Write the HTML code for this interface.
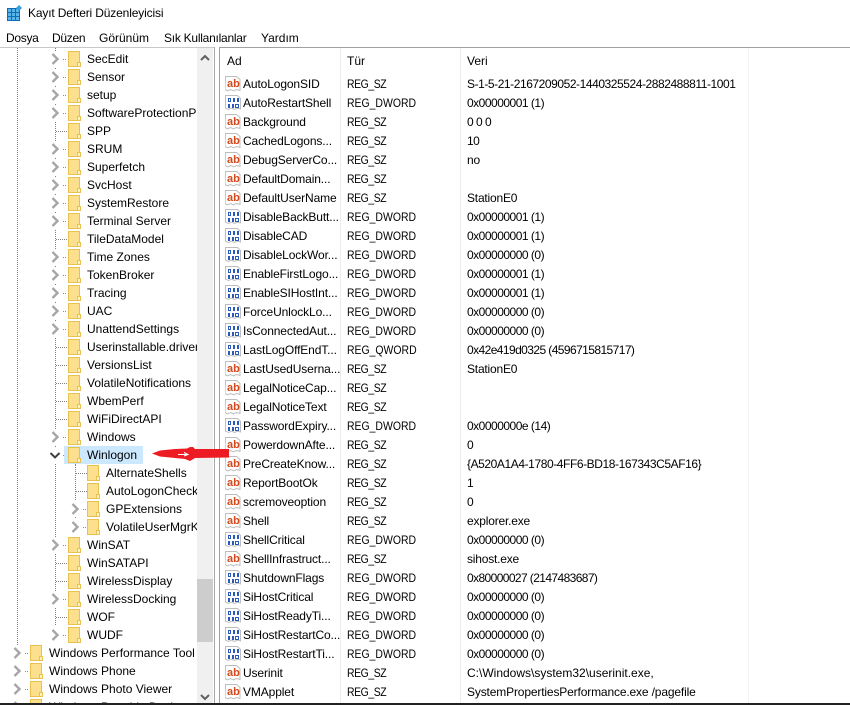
<!DOCTYPE html>
<html><head><meta charset="utf-8"><style>
html,body{margin:0;padding:0;background:#fff}
#w{position:relative;width:850px;height:705px;overflow:hidden;background:#fff;font:12px "Liberation Sans",sans-serif;color:#000}
.a{position:absolute;white-space:nowrap}
#tree{position:absolute;left:0;top:48px;width:197px;height:655px;overflow:hidden}
#list{position:absolute;left:220px;top:48px;width:630px;height:655px;overflow:hidden}
#tree div,#list div{position:absolute;white-space:nowrap;line-height:18px;height:18px}
#tree svg,#list svg{position:absolute;overflow:visible}
.f{width:13px;height:16px}
.c{width:17px;height:16px}
.n{left:23px;width:97px;overflow:hidden;letter-spacing:-.12px}
.t{left:127px;transform:scaleX(.87);transform-origin:left center}
.s{letter-spacing:-.5px}
.v{left:247px;letter-spacing:-.5px}
.w{letter-spacing:-.2px}
.i{left:5px;width:16px;height:16px}
</style></head><body><div id="w">
<svg width="0" height="0" style="position:absolute"><defs>
<symbol id="fo" viewBox="0 0 13 16"><path d="M.5.5h11v15H.5z" fill="#fde08e" stroke="#e9c14f"/><path d="M9.500 15.500v-4h3v4z" fill="#fff2c4" stroke="#e9c14f"/></symbol>
<symbol id="ch" viewBox="0 0 17 16"><rect width="12" height="16" fill="#fff"/><path d="M2.500 3l5 5-5 5" fill="none" stroke="#a6a6a6" stroke-width="2.400"/><path d="M13 8.500h1M15 8.500h1" stroke="#8c8c8c"/></symbol>
<symbol id="bi" viewBox="0 0 16 16"><path d="M.5.5h12l3 3v10.500l-3-.8-3 1.300-3-1.300-3 1.300-3-1.300z" fill="#fff" stroke="#bdbdbd"/><path d="M3 3h3v4H3zM4 4v2h1V4z" fill="#2a5ab8" fill-rule="evenodd"/><path d="M8 3h2v4H8zM12 3h2v4h-2zM3 9h2v4H3zM7 9h2v4H7z" fill="#2a5ab8"/><path d="M10 9h4v4h-4zM11 10v2h2v-2z" fill="#2a5ab8" fill-rule="evenodd"/></symbol>
<symbol id="pg" viewBox="0 0 16 16"><path d="M.5.5h11l3.500 3v11l-3.500-1-3 1.300-3-1.300-3 1.300-2.500-1.300z" fill="#fff" stroke="#bdbdbd"/></symbol>
</defs></svg>

<svg class="a" style="left:7px;top:5px" width="16" height="16" viewBox="0 0 16 16"><path d="M0 3h13v13H0z" fill="#0f6cb8"/><path d="M1 4h3v3H1zM5 4h3v3H5zM9 4h3v3H9zM1 8h3v3H1zM5 8h3v3H5zM9 8h3v3H9zM1 12h3v3H1zM5 12h3v3H5zM9 12h3v3H9z" fill="#59b4e8"/><path d="M12 0l3 3-3 3-3-3z" fill="#3aa0dc"/></svg>
<div class="a" style="left:28px;top:6px;line-height:14px;letter-spacing:-.15px">Kayıt Defteri Düzenleyicisi</div>
<div class="a" style="left:6px;top:31px;line-height:14px;letter-spacing:-.3px">Dosya</div>
<div class="a" style="left:52px;top:31px;line-height:14px;letter-spacing:-.3px">Düzen</div>
<div class="a" style="left:99px;top:31px;line-height:14px">Görünüm</div>
<div class="a" style="left:164px;top:31px;line-height:14px;letter-spacing:-.25px">Sık Kullanılanlar</div>
<div class="a" style="left:261px;top:31px;line-height:14px">Yardım</div>

<div class="a" style="left:0;top:47px;width:215px;height:1px;background:#c8c8c8"></div>
<div class="a" style="left:219px;top:47px;width:631px;height:1px;background:#a0a0a0"></div>
<div class="a" style="left:214px;top:47px;width:1px;height:656px;background:#a8a8a8"></div>
<div class="a" style="left:219px;top:47px;width:1px;height:656px;background:#a0a0a0"></div>

<div class="a" style="left:17px;top:48px;height:597px;border-left:1px dotted #808080"></div>
<div class="a" style="left:55px;top:48px;height:577px;border-left:1px dotted #808080"></div>
<div class="a" style="left:75px;top:464px;height:60px;border-left:1px dotted #808080"></div>

<div id="tree">
<div style="left:64px;top:398px;width:79px;background:#cce8ff"></div>
<svg class="c" style="left:50px;top:3px"><use href="#ch"/></svg><svg class="f" style="left:68px;top:3px"><use href="#fo"/></svg><div style="left:87px;top:2px">SecEdit</div>
<svg class="c" style="left:50px;top:21px"><use href="#ch"/></svg><svg class="f" style="left:68px;top:21px"><use href="#fo"/></svg><div style="left:87px;top:20px">Sensor</div>
<svg class="c" style="left:50px;top:39px"><use href="#ch"/></svg><svg class="f" style="left:68px;top:39px"><use href="#fo"/></svg><div style="left:87px;top:38px">setup</div>
<svg class="c" style="left:50px;top:57px"><use href="#ch"/></svg><svg class="f" style="left:68px;top:57px"><use href="#fo"/></svg><div style="left:87px;top:56px">SoftwareProtectionP</div>
<svg style="left:56px;top:83px" width="12" height="1"><path d="M0 .5h12" stroke="#808080" stroke-dasharray="1 1"/></svg><svg class="f" style="left:68px;top:75px"><use href="#fo"/></svg><div style="left:87px;top:74px">SPP</div>
<svg class="c" style="left:50px;top:93px"><use href="#ch"/></svg><svg class="f" style="left:68px;top:93px"><use href="#fo"/></svg><div style="left:87px;top:92px">SRUM</div>
<svg class="c" style="left:50px;top:111px"><use href="#ch"/></svg><svg class="f" style="left:68px;top:111px"><use href="#fo"/></svg><div style="left:87px;top:110px">Superfetch</div>
<svg class="c" style="left:50px;top:129px"><use href="#ch"/></svg><svg class="f" style="left:68px;top:129px"><use href="#fo"/></svg><div style="left:87px;top:128px">SvcHost</div>
<svg class="c" style="left:50px;top:147px"><use href="#ch"/></svg><svg class="f" style="left:68px;top:147px"><use href="#fo"/></svg><div style="left:87px;top:146px">SystemRestore</div>
<svg class="c" style="left:50px;top:165px"><use href="#ch"/></svg><svg class="f" style="left:68px;top:165px"><use href="#fo"/></svg><div style="left:87px;top:164px">Terminal Server</div>
<svg style="left:56px;top:191px" width="12" height="1"><path d="M0 .5h12" stroke="#808080" stroke-dasharray="1 1"/></svg><svg class="f" style="left:68px;top:183px"><use href="#fo"/></svg><div style="left:87px;top:182px">TileDataModel</div>
<svg class="c" style="left:50px;top:201px"><use href="#ch"/></svg><svg class="f" style="left:68px;top:201px"><use href="#fo"/></svg><div style="left:87px;top:200px">Time Zones</div>
<svg class="c" style="left:50px;top:219px"><use href="#ch"/></svg><svg class="f" style="left:68px;top:219px"><use href="#fo"/></svg><div style="left:87px;top:218px">TokenBroker</div>
<svg class="c" style="left:50px;top:237px"><use href="#ch"/></svg><svg class="f" style="left:68px;top:237px"><use href="#fo"/></svg><div style="left:87px;top:236px">Tracing</div>
<svg class="c" style="left:50px;top:255px"><use href="#ch"/></svg><svg class="f" style="left:68px;top:255px"><use href="#fo"/></svg><div style="left:87px;top:254px">UAC</div>
<svg class="c" style="left:50px;top:273px"><use href="#ch"/></svg><svg class="f" style="left:68px;top:273px"><use href="#fo"/></svg><div style="left:87px;top:272px">UnattendSettings</div>
<svg style="left:56px;top:299px" width="12" height="1"><path d="M0 .5h12" stroke="#808080" stroke-dasharray="1 1"/></svg><svg class="f" style="left:68px;top:291px"><use href="#fo"/></svg><div style="left:87px;top:290px">Userinstallable.driver</div>
<svg style="left:56px;top:317px" width="12" height="1"><path d="M0 .5h12" stroke="#808080" stroke-dasharray="1 1"/></svg><svg class="f" style="left:68px;top:309px"><use href="#fo"/></svg><div style="left:87px;top:308px">VersionsList</div>
<svg style="left:56px;top:335px" width="12" height="1"><path d="M0 .5h12" stroke="#808080" stroke-dasharray="1 1"/></svg><svg class="f" style="left:68px;top:327px"><use href="#fo"/></svg><div style="left:87px;top:326px">VolatileNotifications</div>
<svg style="left:56px;top:353px" width="12" height="1"><path d="M0 .5h12" stroke="#808080" stroke-dasharray="1 1"/></svg><svg class="f" style="left:68px;top:345px"><use href="#fo"/></svg><div style="left:87px;top:344px">WbemPerf</div>
<svg style="left:56px;top:371px" width="12" height="1"><path d="M0 .5h12" stroke="#808080" stroke-dasharray="1 1"/></svg><svg class="f" style="left:68px;top:363px"><use href="#fo"/></svg><div style="left:87px;top:362px">WiFiDirectAPI</div>
<svg class="c" style="left:50px;top:381px"><use href="#ch"/></svg><svg class="f" style="left:68px;top:381px"><use href="#fo"/></svg><div style="left:87px;top:380px">Windows</div>
<svg class="c" style="left:48px;top:399px"><rect x="2" width="11" height="16" fill="#fff"/><path d="M2.500 6l4.500 4.500L11.500 6" fill="none" stroke="#404040" stroke-width="2"/><path d="M15 8.500h1" stroke="#8c8c8c"/></svg><svg class="f" style="left:68px;top:399px"><use href="#fo"/></svg><div style="left:87px;top:398px">Winlogon</div>
<svg style="left:76px;top:425px" width="11" height="1"><path d="M0 .5h11" stroke="#808080" stroke-dasharray="1 1"/></svg><svg class="f" style="left:87px;top:417px"><use href="#fo"/></svg><div style="left:106px;top:416px">AlternateShells</div>
<svg style="left:76px;top:443px" width="11" height="1"><path d="M0 .5h11" stroke="#808080" stroke-dasharray="1 1"/></svg><svg class="f" style="left:87px;top:435px"><use href="#fo"/></svg><div style="left:106px;top:434px">AutoLogonCheck</div>
<svg class="c" style="left:70px;top:453px"><use href="#ch"/></svg><svg class="f" style="left:87px;top:453px"><use href="#fo"/></svg><div style="left:106px;top:452px">GPExtensions</div>
<svg class="c" style="left:70px;top:471px"><use href="#ch"/></svg><svg class="f" style="left:87px;top:471px"><use href="#fo"/></svg><div style="left:106px;top:470px">VolatileUserMgrK</div>
<svg class="c" style="left:50px;top:489px"><use href="#ch"/></svg><svg class="f" style="left:68px;top:489px"><use href="#fo"/></svg><div style="left:87px;top:488px">WinSAT</div>
<svg style="left:56px;top:515px" width="12" height="1"><path d="M0 .5h12" stroke="#808080" stroke-dasharray="1 1"/></svg><svg class="f" style="left:68px;top:507px"><use href="#fo"/></svg><div style="left:87px;top:506px">WinSATAPI</div>
<svg style="left:56px;top:533px" width="12" height="1"><path d="M0 .5h12" stroke="#808080" stroke-dasharray="1 1"/></svg><svg class="f" style="left:68px;top:525px"><use href="#fo"/></svg><div style="left:87px;top:524px">WirelessDisplay</div>
<svg class="c" style="left:50px;top:543px"><use href="#ch"/></svg><svg class="f" style="left:68px;top:543px"><use href="#fo"/></svg><div style="left:87px;top:542px">WirelessDocking</div>
<svg style="left:56px;top:569px" width="12" height="1"><path d="M0 .5h12" stroke="#808080" stroke-dasharray="1 1"/></svg><svg class="f" style="left:68px;top:561px"><use href="#fo"/></svg><div style="left:87px;top:560px">WOF</div>
<svg class="c" style="left:50px;top:579px"><use href="#ch"/></svg><svg class="f" style="left:68px;top:579px"><use href="#fo"/></svg><div style="left:87px;top:578px">WUDF</div>
<svg class="c" style="left:12px;top:597px"><use href="#ch"/></svg><svg class="f" style="left:30px;top:597px"><use href="#fo"/></svg><div style="left:49px;top:596px">Windows Performance Tool</div>
<svg class="c" style="left:12px;top:615px"><use href="#ch"/></svg><svg class="f" style="left:30px;top:615px"><use href="#fo"/></svg><div style="left:49px;top:614px">Windows Phone</div>
<svg class="c" style="left:12px;top:633px"><use href="#ch"/></svg><svg class="f" style="left:30px;top:633px"><use href="#fo"/></svg><div style="left:49px;top:632px">Windows Photo Viewer</div>
<svg class="c" style="left:12px;top:651px"><use href="#ch"/></svg><svg class="f" style="left:30px;top:651px"><use href="#fo"/></svg><div style="left:49px;top:650px">Windows Portable Devices</div>
</div>

<div class="a" style="left:197px;top:48px;width:16px;height:655px;background:#f0f0f0"></div>
<div class="a" style="left:197px;top:579px;width:16px;height:63px;background:#cdcdcd"></div>
<svg class="a" style="left:197px;top:50px" width="16" height="16"><path d="M4 10l4-4 4 4" fill="none" stroke="#606060" stroke-width="2"/></svg>
<svg class="a" style="left:197px;top:693px" width="16" height="10"><path d="M4 2l4 4 4-4" fill="none" stroke="#606060" stroke-width="2"/></svg>

<div class="a" style="left:340px;top:48px;width:1px;height:655px;background:#ececec"></div>
<div class="a" style="left:460px;top:48px;width:1px;height:655px;background:#ececec"></div>
<div class="a" style="left:748px;top:48px;width:1px;height:655px;background:#f4f4f4"></div>

<div class="a" style="left:227px;top:54px;line-height:14px">Ad</div>
<div class="a" style="left:347px;top:54px;line-height:14px">Tür</div>
<div class="a" style="left:467px;top:54px;line-height:14px">Veri</div>

<div id="list">
<svg class="i" style="top:28px"><use href="#pg"/></svg><div style="left:7px;top:27px;color:#d24a1e;font-weight:bold;font-size:11px">ab</div><div class="n" style="top:27px">AutoLogonSID</div><div class="t s" style="top:27px">REG_SZ</div><div class="v" style="top:27px;letter-spacing:-.44px">S-1-5-21-2167209052-1440325524-2882488811-1001</div>
<svg class="i" style="top:47px"><use href="#bi"/></svg><div class="n" style="top:46px">AutoRestartShell</div><div class="t" style="top:46px">REG_DWORD</div><div class="v" style="top:46px">0x00000001 (1)</div>
<svg class="i" style="top:66px"><use href="#pg"/></svg><div style="left:7px;top:65px;color:#d24a1e;font-weight:bold;font-size:11px">ab</div><div class="n" style="top:65px">Background</div><div class="t s" style="top:65px">REG_SZ</div><div class="v" style="top:65px">0 0 0</div>
<svg class="i" style="top:85px"><use href="#pg"/></svg><div style="left:7px;top:84px;color:#d24a1e;font-weight:bold;font-size:11px">ab</div><div class="n" style="top:84px">CachedLogons...</div><div class="t s" style="top:84px">REG_SZ</div><div class="v" style="top:84px">10</div>
<svg class="i" style="top:104px"><use href="#pg"/></svg><div style="left:7px;top:103px;color:#d24a1e;font-weight:bold;font-size:11px">ab</div><div class="n" style="top:103px">DebugServerCo...</div><div class="t s" style="top:103px">REG_SZ</div><div class="v w" style="top:103px">no</div>
<svg class="i" style="top:123px"><use href="#pg"/></svg><div style="left:7px;top:122px;color:#d24a1e;font-weight:bold;font-size:11px">ab</div><div class="n" style="top:122px">DefaultDomain...</div><div class="t s" style="top:122px">REG_SZ</div>
<svg class="i" style="top:142px"><use href="#pg"/></svg><div style="left:7px;top:141px;color:#d24a1e;font-weight:bold;font-size:11px">ab</div><div class="n" style="top:141px">DefaultUserName</div><div class="t s" style="top:141px">REG_SZ</div><div class="v w" style="top:141px">StationE0</div>
<svg class="i" style="top:161px"><use href="#bi"/></svg><div class="n" style="top:160px">DisableBackButt...</div><div class="t" style="top:160px">REG_DWORD</div><div class="v" style="top:160px">0x00000001 (1)</div>
<svg class="i" style="top:180px"><use href="#bi"/></svg><div class="n" style="top:179px">DisableCAD</div><div class="t" style="top:179px">REG_DWORD</div><div class="v" style="top:179px">0x00000001 (1)</div>
<svg class="i" style="top:199px"><use href="#bi"/></svg><div class="n" style="top:198px">DisableLockWor...</div><div class="t" style="top:198px">REG_DWORD</div><div class="v" style="top:198px">0x00000000 (0)</div>
<svg class="i" style="top:218px"><use href="#bi"/></svg><div class="n" style="top:217px">EnableFirstLogo...</div><div class="t" style="top:217px">REG_DWORD</div><div class="v" style="top:217px">0x00000001 (1)</div>
<svg class="i" style="top:237px"><use href="#bi"/></svg><div class="n" style="top:236px">EnableSIHostInt...</div><div class="t" style="top:236px">REG_DWORD</div><div class="v" style="top:236px">0x00000001 (1)</div>
<svg class="i" style="top:256px"><use href="#bi"/></svg><div class="n" style="top:255px">ForceUnlockLo...</div><div class="t" style="top:255px">REG_DWORD</div><div class="v" style="top:255px">0x00000000 (0)</div>
<svg class="i" style="top:275px"><use href="#bi"/></svg><div class="n" style="top:274px">IsConnectedAut...</div><div class="t" style="top:274px">REG_DWORD</div><div class="v" style="top:274px">0x00000000 (0)</div>
<svg class="i" style="top:294px"><use href="#bi"/></svg><div class="n" style="top:293px">LastLogOffEndT...</div><div class="t" style="top:293px">REG_QWORD</div><div class="v" style="top:293px;letter-spacing:-.58px">0x42e419d0325 (4596715815717)</div>
<svg class="i" style="top:313px"><use href="#pg"/></svg><div style="left:7px;top:312px;color:#d24a1e;font-weight:bold;font-size:11px">ab</div><div class="n" style="top:312px">LastUsedUserna...</div><div class="t s" style="top:312px">REG_SZ</div><div class="v w" style="top:312px">StationE0</div>
<svg class="i" style="top:332px"><use href="#pg"/></svg><div style="left:7px;top:331px;color:#d24a1e;font-weight:bold;font-size:11px">ab</div><div class="n" style="top:331px">LegalNoticeCap...</div><div class="t s" style="top:331px">REG_SZ</div>
<svg class="i" style="top:351px"><use href="#pg"/></svg><div style="left:7px;top:350px;color:#d24a1e;font-weight:bold;font-size:11px">ab</div><div class="n" style="top:350px">LegalNoticeText</div><div class="t s" style="top:350px">REG_SZ</div>
<svg class="i" style="top:370px"><use href="#bi"/></svg><div class="n" style="top:369px">PasswordExpiry...</div><div class="t" style="top:369px">REG_DWORD</div><div class="v" style="top:369px">0x0000000e (14)</div>
<svg class="i" style="top:389px"><use href="#pg"/></svg><div style="left:7px;top:388px;color:#d24a1e;font-weight:bold;font-size:11px">ab</div><div class="n" style="top:388px">PowerdownAfte...</div><div class="t s" style="top:388px">REG_SZ</div><div class="v" style="top:388px">0</div>
<svg class="i" style="top:408px"><use href="#pg"/></svg><div style="left:7px;top:407px;color:#d24a1e;font-weight:bold;font-size:11px">ab</div><div class="n" style="top:407px">PreCreateKnow...</div><div class="t s" style="top:407px">REG_SZ</div><div class="v" style="top:407px;letter-spacing:-.42px">{A520A1A4-1780-4FF6-BD18-167343C5AF16}</div>
<svg class="i" style="top:427px"><use href="#pg"/></svg><div style="left:7px;top:426px;color:#d24a1e;font-weight:bold;font-size:11px">ab</div><div class="n" style="top:426px">ReportBootOk</div><div class="t s" style="top:426px">REG_SZ</div><div class="v" style="top:426px">1</div>
<svg class="i" style="top:446px"><use href="#pg"/></svg><div style="left:7px;top:445px;color:#d24a1e;font-weight:bold;font-size:11px">ab</div><div class="n" style="top:445px">scremoveoption</div><div class="t s" style="top:445px">REG_SZ</div><div class="v" style="top:445px">0</div>
<svg class="i" style="top:465px"><use href="#pg"/></svg><div style="left:7px;top:464px;color:#d24a1e;font-weight:bold;font-size:11px">ab</div><div class="n" style="top:464px">Shell</div><div class="t s" style="top:464px">REG_SZ</div><div class="v w" style="top:464px">explorer.exe</div>
<svg class="i" style="top:484px"><use href="#bi"/></svg><div class="n" style="top:483px">ShellCritical</div><div class="t" style="top:483px">REG_DWORD</div><div class="v" style="top:483px">0x00000000 (0)</div>
<svg class="i" style="top:503px"><use href="#pg"/></svg><div style="left:7px;top:502px;color:#d24a1e;font-weight:bold;font-size:11px">ab</div><div class="n" style="top:502px">ShellInfrastruct...</div><div class="t s" style="top:502px">REG_SZ</div><div class="v w" style="top:502px">sihost.exe</div>
<svg class="i" style="top:522px"><use href="#bi"/></svg><div class="n" style="top:521px">ShutdownFlags</div><div class="t" style="top:521px">REG_DWORD</div><div class="v" style="top:521px;letter-spacing:-.6px">0x80000027 (2147483687)</div>
<svg class="i" style="top:541px"><use href="#bi"/></svg><div class="n" style="top:540px">SiHostCritical</div><div class="t" style="top:540px">REG_DWORD</div><div class="v" style="top:540px">0x00000000 (0)</div>
<svg class="i" style="top:560px"><use href="#bi"/></svg><div class="n" style="top:559px">SiHostReadyTi...</div><div class="t" style="top:559px">REG_DWORD</div><div class="v" style="top:559px">0x00000000 (0)</div>
<svg class="i" style="top:579px"><use href="#bi"/></svg><div class="n" style="top:578px">SiHostRestartCo...</div><div class="t" style="top:578px">REG_DWORD</div><div class="v" style="top:578px">0x00000000 (0)</div>
<svg class="i" style="top:598px"><use href="#bi"/></svg><div class="n" style="top:597px">SiHostRestartTi...</div><div class="t" style="top:597px">REG_DWORD</div><div class="v" style="top:597px">0x00000000 (0)</div>
<svg class="i" style="top:617px"><use href="#pg"/></svg><div style="left:7px;top:616px;color:#d24a1e;font-weight:bold;font-size:11px">ab</div><div class="n" style="top:616px">Userinit</div><div class="t s" style="top:616px">REG_SZ</div><div class="v" style="top:616px;letter-spacing:0">C:\Windows\system32\userinit.exe,</div>
<svg class="i" style="top:636px"><use href="#pg"/></svg><div style="left:7px;top:635px;color:#d24a1e;font-weight:bold;font-size:11px">ab</div><div class="n" style="top:635px">VMApplet</div><div class="t s" style="top:635px">REG_SZ</div><div class="v" style="top:635px;letter-spacing:-.15px">SystemPropertiesPerformance.exe /pagefile</div>
</div>

<svg class="a" style="left:150px;top:444px" width="82" height="20" viewBox="0 0 82 20"><path d="M2 9.500L10 6.500 25 5 37 4.500 40 3 43 3 45 5 79 5V13.500L45 14 40 17 35 15 25 14 10 12.500z" fill="#ed1c24"/><path d="M28 10.500h10M34 8.500l4 2-4 1.500" fill="none" stroke="#fff" stroke-width="1"/></svg>

<div class="a" style="left:0;top:703px;width:850px;height:2px;background:#222"></div>
</div></body></html>
